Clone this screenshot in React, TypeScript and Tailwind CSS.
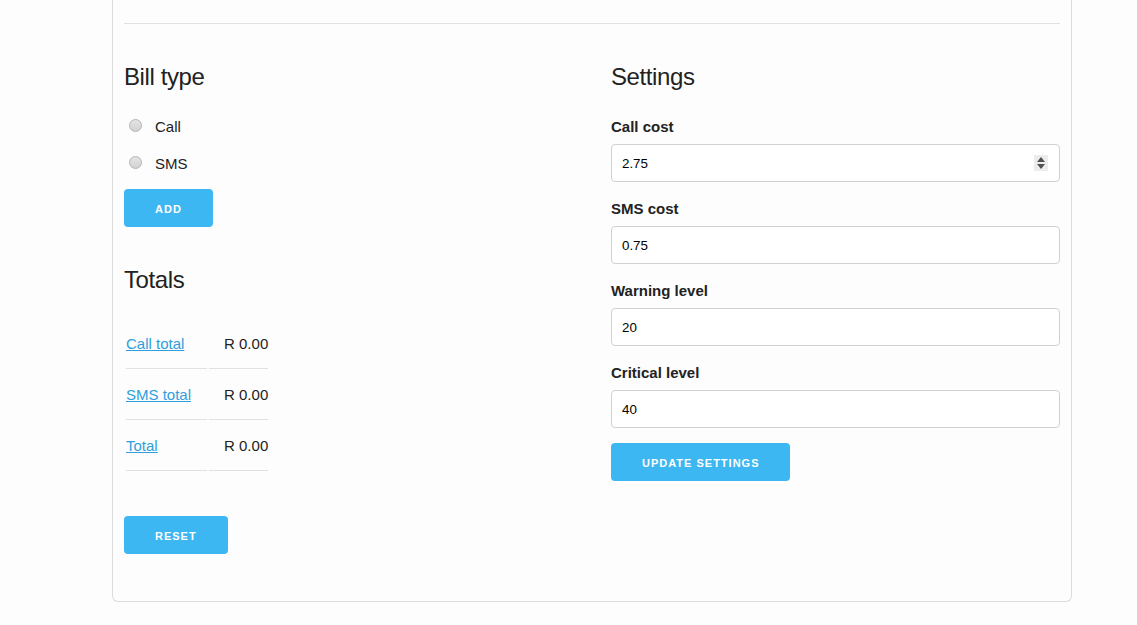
import React from "react";

const font = "font-['Liberation_Sans',Arial,sans-serif]";

function Button({ label }: { label: string }) {
  return (
    <button className="h-[38px] px-[31px] pt-[2px] rounded-[4px] bg-[#3cb7f2] text-white text-[11px] font-bold uppercase tracking-[1px] leading-[36px]">
      {label}
    </button>
  );
}

function Radio({ label, mt }: { label: string; mt: string }) {
  return (
    <label className={`flex items-center h-6 ${mt}`}>
      <span className="ml-[5px] -mt-[3px] w-[13px] h-[13px] rounded-full border border-[#b4b4b4] bg-gradient-to-b from-[#e4e4e4] to-[#d2d2d2]" />
      <span className="ml-[13px] text-[15px] text-[#222]">{label}</span>
    </label>
  );
}

function Spinner() {
  return (
    <span className="mr-[11px] w-[14px] h-[16px] bg-[#ececec] flex flex-col items-center justify-center gap-[2px]">
      <svg width="8" height="5" viewBox="0 0 8 5">
        <path d="M4 0 L8 5 L0 5 Z" fill="#505050" />
      </svg>
      <svg width="8" height="5" viewBox="0 0 8 5">
        <path d="M0 0 L8 0 L4 5 Z" fill="#505050" />
      </svg>
    </span>
  );
}

function Field({ label, value, spin, mt }: { label: string; value: string; spin?: boolean; mt: string }) {
  return (
    <div className={`flex flex-col ${mt}`}>
      <label className="h-6 leading-6 text-[15px] font-bold text-[#222]">{label}</label>
      <div className="mt-[5px] h-[38px] flex items-center rounded-[4px] border border-[#d1d1d1] bg-white">
        <input
          readOnly
          value={value}
          className="flex-1 h-full px-[10px] text-[13.333px] text-black outline-none"
        />
        {spin && <Spinner />}
      </div>
    </div>
  );
}

const totals = ["Call total", "SMS total", "Total"];

export default function App() {
  return (
    <div className={`min-h-[625px] bg-[#fdfdfd] ${font}`}>
      <div className="ml-[112px] w-[960px] h-[602px] border-x border-b border-[#dcdcdc] rounded-b-[6px] px-[11px] pt-[23px]">
        <div className="h-px bg-[#e1e1e1]" />
        <div className="flex gap-[38px]">
          <div className="w-[449px] flex flex-col items-start">
            <h4 className="mt-[37px] h-8 leading-8 text-[24px] tracking-[-0.4px] text-[#222]">Bill type</h4>
            <Radio label="Call" mt="mt-[22px]" />
            <Radio label="SMS" mt="mt-[13px]" />
            <div className="mt-[13px]">
              <Button label="Add" />
            </div>
            <h4 className="mt-[37px] h-8 leading-8 text-[24px] tracking-[-0.4px] text-[#222]">Totals</h4>
            <table className="mt-[22px] border-separate border-spacing-[2px] text-[15px] text-[#222]">
              <tbody>
                {totals.map((t) => (
                  <tr key={t}>
                    <td className="py-3 pr-[16px] leading-6 border-b border-[#e1e1e1]">
                      <a href="#" className="text-[#2e9fdc] underline">{t}</a>
                    </td>
                    <td className="py-3 pl-[15px] leading-6 border-b border-[#e1e1e1]">R 0.00</td>
                  </tr>
                ))}
              </tbody>
            </table>
            <div className="mt-[43px]">
              <Button label="Reset" />
            </div>
          </div>
          <div className="w-[449px] flex flex-col items-stretch">
            <h4 className="mt-[37px] h-8 leading-8 text-[24px] tracking-[-0.4px] text-[#222]">Settings</h4>
            <Field label="Call cost" value="2.75" spin mt="mt-[22px]" />
            <Field label="SMS cost" value="0.75" mt="mt-[15px]" />
            <Field label="Warning level" value="20" mt="mt-[15px]" />
            <Field label="Critical level" value="40" mt="mt-[15px]" />
            <div className="mt-[15px]">
              <Button label="Update settings" />
            </div>
          </div>
        </div>
      </div>
    </div>
  );
}
